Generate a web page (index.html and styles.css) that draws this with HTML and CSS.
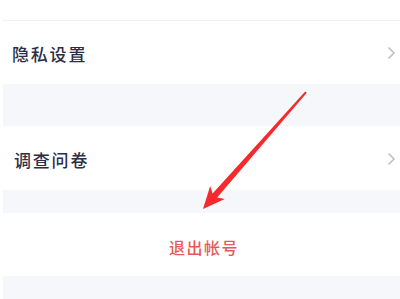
FILE: index.html
```html
<!DOCTYPE html>
<html lang="zh">
<head>
<meta charset="utf-8">
<link rel="stylesheet" href="styles.css">
</head>
<body>
<div class="page">
  <div class="top"></div>
  <div class="row row-a">
    <span class="label">隐私设置</span>
    <svg class="chev" width="9" height="14" viewBox="0 0 9 14"><path d="M1.5 1.5 L7 7 L1.5 12.5" fill="none" stroke="#bfc0c5" stroke-width="1.6"/></svg>
  </div>
  <div class="gap gap-a"></div>
  <div class="row row-b">
    <span class="label label-b">调查问卷</span>
    <svg class="chev" width="9" height="14" viewBox="0 0 9 14"><path d="M1.5 1.5 L7 7 L1.5 12.5" fill="none" stroke="#bfc0c5" stroke-width="1.6"/></svg>
  </div>
  <div class="gap gap-b"></div>
  <div class="row row-c">
    <span class="logout">退出帐号</span>
  </div>
  <div class="gap gap-c"></div>
  <svg class="arrow" width="400" height="299" viewBox="0 0 400 299">
    <polygon points="203,209 210.2,186.1 212.6,193.5 305.2,91.4 306.8,92.8 217.2,197.4 224.8,198.9" fill="#f42a2c"/>
  </svg>
</div>
</body>
</html>
```
FILE: styles.css
```css
html, body {
  margin: 0;
  padding: 0;
  background: #ffffff;
}
.page {
  position: relative;
  width: 400px;
  height: 299px;
  overflow: hidden;
  display: flex;
  flex-direction: column;
  font-family: "Noto Sans CJK SC", "Noto Sans", sans-serif;
}
.top {
  height: 20px;
  border-bottom: 1px solid #f1f1f4;
  margin-left: 3px;
}
.row {
  display: flex;
  align-items: center;
  justify-content: space-between;
  padding: 0 4px 0 12px;
  background: #ffffff;
}
.row-a { height: 63px; }
.row-b { height: 64px; }
.row-c { height: 63px; justify-content: center; padding: 0; }
.label {
  font-size: 17px;
  font-weight: 500;
  letter-spacing: 1.8px;
  color: #2c2d47;
  line-height: 1;
  margin-top: 1px;
}
.label-b {
  margin-left: 2px;
  margin-top: 3px;
}
.chev {
  margin-top: 1px;
}
.logout {
  font-size: 16px;
  font-weight: 500;
  letter-spacing: 1.5px;
  color: #e85a57;
  line-height: 1;
  margin-top: 4px;
  margin-left: 8px;
}
.gap {
  background: #f6f7fb;
  margin-left: 3px;
}
.gap-a { height: 42px; }
.gap-b { height: 23px; }
.gap-c { flex: 1; }
.arrow {
  position: absolute;
  left: 0;
  top: 0;
}
```
